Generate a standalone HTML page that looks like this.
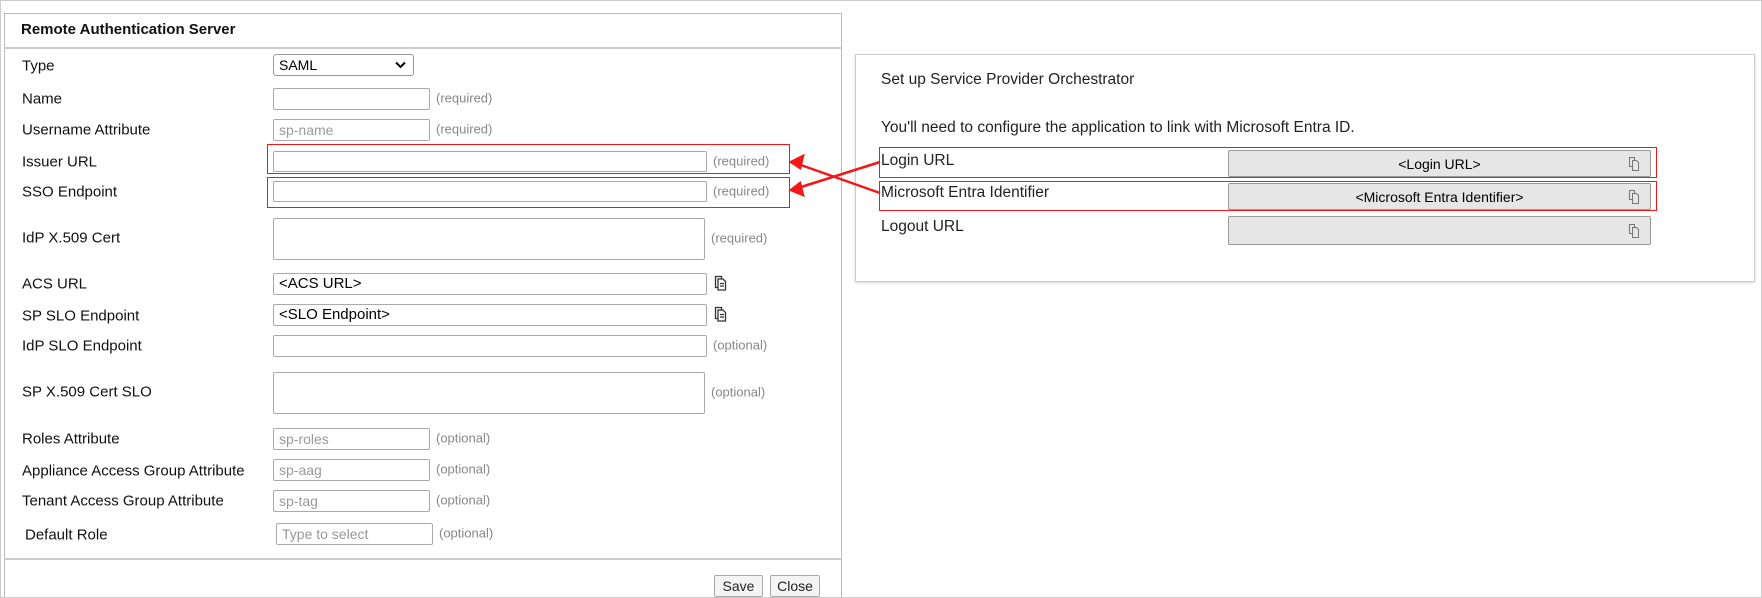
<!DOCTYPE html>
<html style="overflow:hidden;height:598px"><head><meta charset="utf-8"><style>
*{box-sizing:border-box;margin:0;padding:0}
body{width:1762px;height:598px;position:relative;background:#fff;font-family:"Liberation Sans",Arial,sans-serif;overflow:hidden}
.a{position:absolute}
.lbl{position:absolute;left:22px;font-size:15px;color:#111;transform:translateY(-50%);white-space:nowrap}
.in{position:absolute;border:1px solid #aaa;border-radius:2px;background:#fff;font-size:14px;color:#999;padding-left:5px;line-height:20px}
.req{position:absolute;font-size:13px;color:#888;transform:translateY(-50%)}
.red{position:absolute;border:1.5px solid #f01818}
.gf{position:absolute;left:1228px;width:423px;background:#e6e6e6;border:1px solid #999;border-radius:2px;font-size:14px;color:#000;text-align:center;line-height:26px}
.rl{position:absolute;left:881px;font-size:15.5px;color:#222;transform:translateY(-50%)}
.btn{position:absolute;top:575px;height:22px;border:1px solid #aaa;border-radius:2px;background:#f4f4f4;font-size:14px;text-align:center;line-height:21px;color:#222}
</style></head><body>
<div class="a" style="left:4px;top:13px;width:838px;height:585px;border:1px solid #bbb;border-bottom:none"></div>
<div class="a" style="left:0;top:0;width:1762px;height:598px;border:1px solid #ccc"></div>
<div class="a" style="left:4px;top:47px;width:838px;height:2px;background:#ccc"></div>
<div class="a" style="left:4px;top:558px;width:838px;height:2px;background:#ccc"></div>
<div class="a" style="left:21px;top:21px;font-size:15px;font-weight:bold;color:#111">Remote Authentication Server</div>

<div class="lbl" style="top:66px">Type</div>
<div class="a" style="left:273px;top:54px;width:141px;height:22px;border:1px solid #999;border-radius:3px;font-size:14px;line-height:20px;padding-left:5px;color:#000">SAML
<svg class="a" style="right:7px;top:6px" width="11" height="8" viewBox="0 0 11 8"><path d="M1 1.5 L5.5 6 L10 1.5" fill="none" stroke="#000" stroke-width="2"/></svg></div>

<div class="lbl" style="top:99px">Name</div>
<div class="in" style="left:273px;top:88px;width:157px;height:22px"></div>
<div class="req" style="left:436px;top:98px">(required)</div>

<div class="lbl" style="top:130px">Username Attribute</div>
<div class="in" style="left:273px;top:119px;width:157px;height:22px">sp-name</div>
<div class="req" style="left:436px;top:129px">(required)</div>

<div class="lbl" style="top:162px">Issuer URL</div>
<div class="in" style="left:273px;top:151px;width:434px;height:21px"></div>
<div class="req" style="left:713px;top:161px">(required)</div>
<div class="red" style="left:267px;top:144px;width:523px;height:30px"></div>

<div class="lbl" style="top:192px">SSO Endpoint</div>
<div class="in" style="left:273px;top:181px;width:434px;height:21px"></div>
<div class="req" style="left:713px;top:191px">(required)</div>
<div class="red" style="left:267px;top:177px;width:523px;height:31px"></div>

<div class="lbl" style="top:238px">IdP X.509 Cert</div>
<div class="in" style="left:273px;top:218px;width:432px;height:42px"></div>
<div class="req" style="left:711px;top:238px">(required)</div>

<div class="lbl" style="top:284px">ACS URL</div>
<div class="in" style="left:273px;top:273px;width:434px;height:22px;color:#000;font-size:15px">&lt;ACS URL&gt;</div>

<div class="lbl" style="top:316px">SP SLO Endpoint</div>
<div class="in" style="left:273px;top:304px;width:434px;height:22px;color:#000;font-size:15px">&lt;SLO Endpoint&gt;</div>

<svg class="a" style="left:713px;top:274px" width="14" height="50" viewBox="0 0 14 50">
<g fill="#fff" stroke="#333" stroke-width="1.3">
<path d="M2.5 2.5h6v11h-6z"/><path d="M5 5h5l2.5 2.5v8.5H5z"/><path d="M7 9.5h4M7 12h4" />
<g transform="translate(0,31)"><path d="M2.5 2.5h6v11h-6z"/><path d="M5 5h5l2.5 2.5v8.5H5z"/><path d="M7 9.5h4M7 12h4"/></g>
</g></svg>

<div class="lbl" style="top:346px">IdP SLO Endpoint</div>
<div class="in" style="left:273px;top:335px;width:434px;height:22px"></div>
<div class="req" style="left:713px;top:345px">(optional)</div>

<div class="lbl" style="top:392px">SP X.509 Cert SLO</div>
<div class="in" style="left:273px;top:372px;width:432px;height:42px"></div>
<div class="req" style="left:711px;top:392px">(optional)</div>

<div class="lbl" style="top:439px">Roles Attribute</div>
<div class="in" style="left:273px;top:428px;width:157px;height:22px">sp-roles</div>
<div class="req" style="left:436px;top:438px">(optional)</div>

<div class="lbl" style="top:471px">Appliance Access Group Attribute</div>
<div class="in" style="left:273px;top:459px;width:157px;height:22px">sp-aag</div>
<div class="req" style="left:436px;top:469px">(optional)</div>

<div class="lbl" style="top:501px">Tenant Access Group Attribute</div>
<div class="in" style="left:273px;top:490px;width:157px;height:22px">sp-tag</div>
<div class="req" style="left:436px;top:500px">(optional)</div>

<div class="lbl" style="top:535px;left:25px">Default Role</div>
<div class="in" style="left:276px;top:523px;width:157px;height:22px">Type to select</div>
<div class="req" style="left:439px;top:533px">(optional)</div>

<div class="btn" style="left:714px;width:49px">Save</div>
<div class="btn" style="left:770px;width:50px">Close</div>

<div class="a" style="left:855px;top:54px;width:900px;height:228px;border:1px solid #ccc;box-shadow:0 1px 3px rgba(0,0,0,.15)"></div>
<div class="a" style="left:881px;top:71px;font-size:15.5px;color:#222">Set up Service Provider Orchestrator</div>
<div class="a" style="left:881px;top:119px;font-size:15.5px;color:#222">You'll need to configure the application to link with Microsoft Entra ID.</div>

<div class="rl" style="top:161px">Login URL</div>
<div class="gf" style="top:150px;height:27px">&lt;Login URL&gt;</div>
<div class="rl" style="top:193px">Microsoft Entra Identifier</div>
<div class="gf" style="top:183px;height:27px">&lt;Microsoft Entra Identifier&gt;</div>
<div class="rl" style="top:227px">Logout URL</div>
<div class="gf" style="top:216px;height:29px"></div>
<svg class="a" style="left:1627px;top:156px" width="14" height="90" viewBox="0 0 14 90">
<g fill="none" stroke="#777" stroke-width="1"><path d="M2.5 1.5h5v9h-5z"/><path d="M5.5 4.5h4l2 2v8h-6z" fill="#e6e6e6"/></g>
<g fill="none" stroke="#777" stroke-width="1" transform="translate(0,33)"><path d="M2.5 1.5h5v9h-5z"/><path d="M5.5 4.5h4l2 2v8h-6z" fill="#e6e6e6"/></g>
<g fill="none" stroke="#777" stroke-width="1" transform="translate(0,67)"><path d="M2.5 1.5h5v9h-5z"/><path d="M5.5 4.5h4l2 2v8h-6z" fill="#e6e6e6"/></g>
</svg>
<div class="red" style="left:879px;top:147px;width:778px;height:31px"></div>
<div class="red" style="left:879px;top:181px;width:778px;height:30px"></div>

<svg class="a" style="left:0;top:0" width="1762" height="598">
<g stroke="#f01818" stroke-width="2.5" fill="#f01818">
<line x1="880" y1="162" x2="798" y2="188"/>
<line x1="880" y1="193" x2="798" y2="164"/>
<path d="M791 162 L803 156 L800 168 Z"/>
<path d="M791 190 L800 183 L803 195 Z"/>
</g></svg>
</body></html>
